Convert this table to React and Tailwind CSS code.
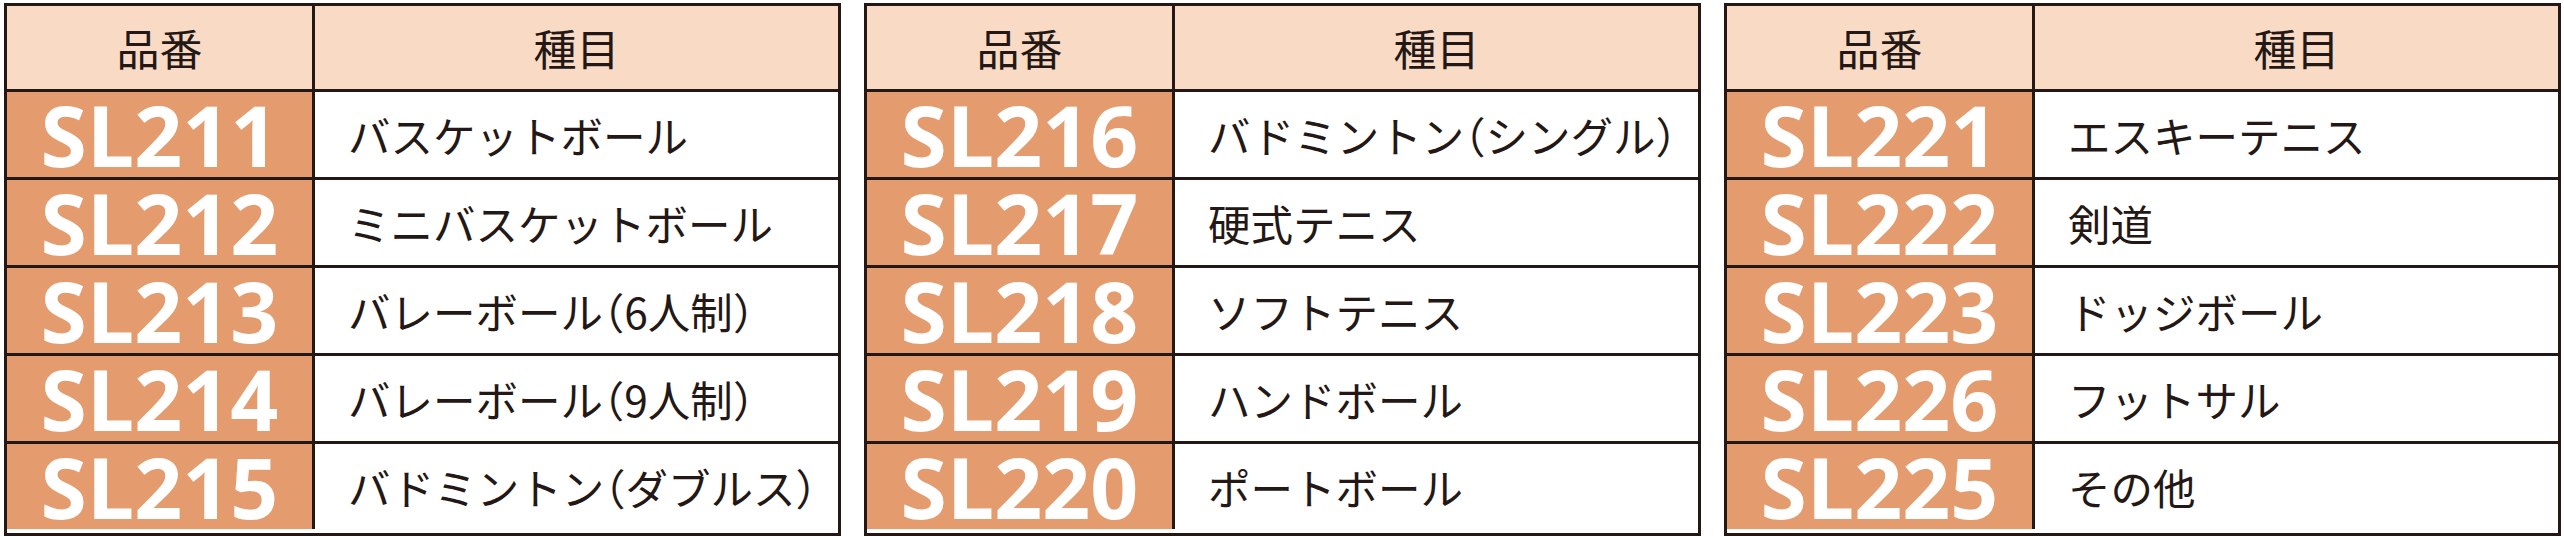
import React from "react";

const tables = [
  [
    ["SL211", "バスケットボール"],
    ["SL212", "ミニバスケットボール"],
    ["SL213", "バレーボール（6人制）"],
    ["SL214", "バレーボール（9人制）"],
    ["SL215", "バドミントン（ダブルス）"],
  ],
  [
    ["SL216", "バドミントン（シングル）"],
    ["SL217", "硬式テニス"],
    ["SL218", "ソフトテニス"],
    ["SL219", "ハンドボール"],
    ["SL220", "ポートボール"],
  ],
  [
    ["SL221", "エスキーテニス"],
    ["SL222", "剣道"],
    ["SL223", "ドッジボール"],
    ["SL226", "フットサル"],
    ["SL225", "その他"],
  ],
];

function Name({ text }) {
  const parts = [];
  let buf = "";
  for (const ch of text) {
    if (ch === "（" || ch === "）") {
      if (buf) parts.push(buf);
      buf = "";
      parts.push(ch);
    } else buf += ch;
  }
  if (buf) parts.push(buf);
  return (
    <span className="whitespace-nowrap">
      {parts.map((p, i) =>
        p === "（" || p === "）" ? (
          <span key={i} className="[font-feature-settings:'halt']">
            {p}
          </span>
        ) : (
          <span key={i}>{p}</span>
        )
      )}
    </span>
  );
}

function Table({ rows }) {
  return (
    <div className="w-[837px] border-[3px] border-[#231815] bg-white">
      <div className="grid grid-cols-[308px_1fr]">
        <div className="h-[86px] flex items-center justify-center bg-[#f9dbc5] border-r-[3px] border-b-[3px] border-[#231815] text-[43px] leading-[83px] text-[#231815]">
          品番
        </div>
        <div className="h-[86px] flex items-center justify-center bg-[#f9dbc5] border-b-[3px] border-[#231815] text-[43px] leading-[83px] text-[#231815]">
          種目
        </div>
        {rows.map(([code, name], i) => {
          const last = i === rows.length - 1;
          return (
            <React.Fragment key={code}>
              <div
                className={
                  last
                    ? "h-[85px] flex items-center justify-center bg-[#e49c6e] border-r-[3px] border-[#231815]"
                    : "h-[88px] flex items-center justify-center bg-[#e49c6e] border-r-[3px] border-b-[3px] border-[#231815]"
                }
              >
                <span className="font-['Open_Sans',sans-serif] font-bold text-[84px] leading-[85px] text-white">
                  {code}
                </span>
              </div>
              <div
                className={
                  last
                    ? "h-[85px] flex items-center pl-[33px] bg-white text-[42.5px] leading-[85px] text-[#231815]"
                    : "h-[88px] flex items-center pl-[33px] bg-white border-b-[3px] border-[#231815] text-[42.5px] leading-[85px] text-[#231815]"
                }
              >
                <Name text={name} />
              </div>
            </React.Fragment>
          );
        })}
      </div>
    </div>
  );
}

export default function App() {
  return (
    <div className="w-[2564px] h-[536px] bg-white pl-[4px] pt-[3px] flex gap-[23px] font-['Noto_Sans_CJK_JP','Noto_Sans',sans-serif]">
      {tables.map((rows, i) => (
        <Table key={i} rows={rows} />
      ))}
    </div>
  );
}
